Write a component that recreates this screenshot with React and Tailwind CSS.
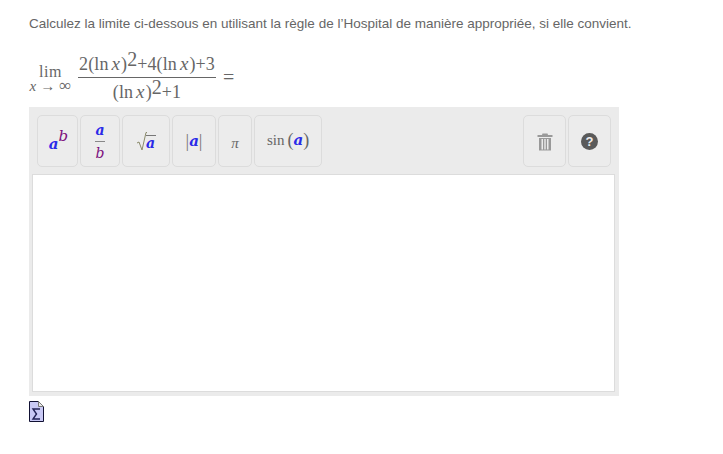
import React from "react";

const serif = "font-['Liberation_Serif',serif]";

const Lnx = () => (
    <span>
        (ln<span className="ml-[3px] mr-[1px] text-[19px] italic">x</span>)
    </span>
);

const Sq = () => <span className="relative -top-[4px] text-[20px] leading-none">2</span>;

const Btn = ({ w, children }) => (
    <div
        className={`flex h-[52px] ${w} items-center justify-center rounded-[5px] border border-[#dcdcdc] bg-[#ececec] ${serif}`}
    >
        {children}
    </div>
);

const A = () => <span className="font-['DejaVu_Serif',serif] font-semibold italic text-[#2a2ae8]">a</span>;
const B = () => <span className="font-['DejaVu_Serif',serif] italic text-[#7d0f7d]">b</span>;

const App = () => {
    return (
        <div className="h-[454px] w-[723px] overflow-hidden bg-white pl-[29px] pt-[15px] text-[#666666]">
            <p className="font-['Liberation_Sans',sans-serif] text-[13.5px] leading-[17px]">
                Calculez la limite ci-dessous en utilisant la règle de l’Hospital de manière appropriée, si elle convient.
            </p>

            <div className={`mt-[19px] flex h-[51px] items-center ${serif}`}>
                <div className="flex w-[43px] flex-col items-center pt-[4px]">
                    <span className="text-[16px] leading-[14px] tracking-[0.6px]">lim</span>
                    <span className="flex h-[14px] w-[42px] items-center justify-between whitespace-nowrap text-[15px] leading-[14px]">
                        <span className="text-[15px] italic">x</span>
                        <span>→</span>
                        <span className="text-[17px]">∞</span>
                    </span>
                </div>
                <div className="ml-[6px] flex w-[138px] flex-col items-center text-[18px] tracking-[0.1px]">
                    <div className="h-[26px] whitespace-nowrap leading-[26px]">
                        2<Lnx />
                        <Sq />
                        +4
                        <Lnx />
                        +3
                    </div>
                    <div className="h-px w-full bg-[#666666]"></div>
                    <div className="h-[24px] whitespace-nowrap leading-[27px]">
                        <Lnx />
                        <Sq />
                        +1
                    </div>
                </div>
                <span className="ml-[7px] text-[20px]">=</span>
            </div>

            <div className="mt-[5px] flex h-[289px] w-[590px] flex-col bg-[#ebebeb] pl-[3px] pr-[4px] pt-[8px]">
                <div className="flex justify-between pl-[5px] pr-[4px]">
                    <div className="flex gap-[2px]">
                        <Btn w="w-[41px]">
                            <span className="relative left-[1px] top-[3px] text-[15px] leading-none">
                                <A />
                                <span className="relative -top-[8px] text-[15px]">
                                    <B />
                                </span>
                            </span>
                        </Btn>
                        <Btn w="w-[40px]">
                            <span className="flex flex-col items-center text-[14px] leading-[14px]">
                                <A />
                                <span className="my-[4px] h-px w-[10px] bg-[#888888]"></span>
                                <B />
                            </span>
                        </Btn>
                        <Btn w="w-[48px]">
                            <span className="flex items-end text-[14px] leading-none">
                                <svg width="11" height="19" viewBox="0 0 11 19" className="-mr-px">
                                    <path d="M1 11 L3 10 L6 18 L10 0.5 H11" fill="none" stroke="#8a8a6a" strokeWidth="1" />
                                </svg>
                                <span className="border-t border-[#777777] pr-[1px]">
                                    <A />
                                </span>
                            </span>
                        </Btn>
                        <Btn w="w-[44px]">
                            <span className="flex items-center text-[15px] leading-none text-[#777777]">
                                <span className="text-[18px]">|</span>
                                <A />
                                <span className="text-[18px]">|</span>
                            </span>
                        </Btn>
                        <Btn w="w-[34px]">
                            <span className="relative top-[2px] text-[15px] italic leading-none text-[#666666]">π</span>
                        </Btn>
                        <Btn w="w-[68px]">
                            <span className="relative -top-[1px] flex items-center gap-[3px] text-[15px] leading-none text-[#666666]">
                                sin
                                <span className="flex items-center">
                                    <span className="text-[18px]">(</span>
                                    <A />
                                    <span className="text-[18px]">)</span>
                                </span>
                            </span>
                        </Btn>
                    </div>
                    <div className="flex gap-[2px]">
                        <Btn w="w-[43px]">
                            <svg width="16" height="18" viewBox="0 0 16 18" className="mt-[2px]">
                                <path d="M0.5 2 H5 L5.5 0.5 H10.5 L11 2 H15.5 V4 H0.5 Z" fill="#999999" />
                                <path d="M2 5 H14 V17.5 H2 Z M4.5 6 V16.5 H6 V6 Z M7.3 6 V16.5 H8.7 V6 Z M10 6 V16.5 H11.5 V6 Z" fill="#999999" fillRule="evenodd" />
                            </svg>
                        </Btn>
                        <Btn w="w-[43px]">
                            <span className="flex h-[17px] w-[17px] items-center justify-center rounded-full bg-[#5a5a5a] font-['Liberation_Sans',sans-serif] text-[13px] font-bold leading-none text-[#eeeeee]">
                                ?
                            </span>
                        </Btn>
                    </div>
                </div>
                <div className="mt-[7px] h-[218px] w-[583px] border border-[#dcdcdc] bg-white"></div>
            </div>

            <svg width="15" height="21" viewBox="0 0 15 21" className="mt-[5px] block">
                <path d="M0.5 0.5 H9.5 L14.5 5.5 V20.5 H0.5 Z" fill="#c9c9f5" stroke="#111133" />
                <path d="M9.5 0.5 V5.5 H14.5 Z" fill="#e8e8e8" stroke="#777777" />
                <path d="M11 8 H4 L7.5 13 L4 18 H11" fill="none" stroke="#222255" strokeWidth="1.4" />
            </svg>
        </div>
    );
};

export default App;
